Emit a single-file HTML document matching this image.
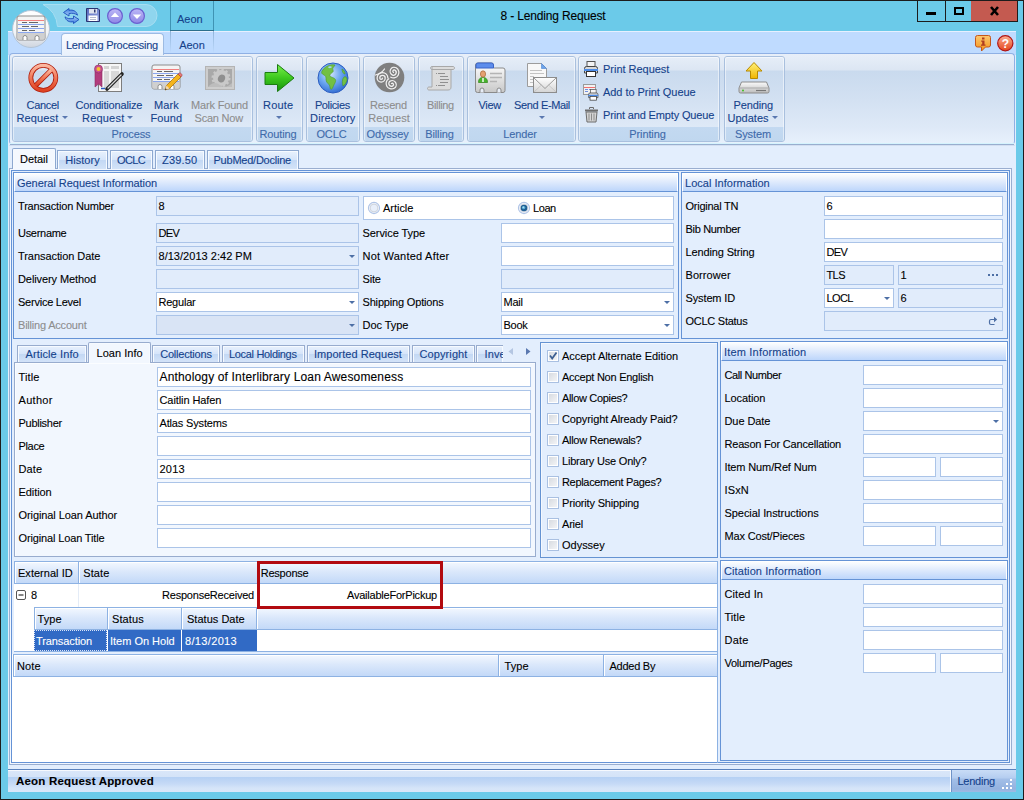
<!DOCTYPE html>
<html><head><meta charset="utf-8"><title>8 - Lending Request</title>
<style>
*{box-sizing:border-box;margin:0;padding:0}
html,body{width:1024px;height:800px;overflow:hidden;background:#6bcae9}
body{font-family:"Liberation Sans",sans-serif;font-size:11px;letter-spacing:-0.24px;color:#000;position:relative;-webkit-text-stroke:0.1px}
.a{position:absolute}
svg{position:absolute;overflow:visible}
#win{position:absolute;left:0;top:0;width:1024px;height:800px;background:#6bcae9;overflow:hidden}
.t{position:absolute;white-space:nowrap;line-height:13px;height:13px}
.bl{color:#15428b}
.gy{color:#8d8d8d}
.cap{color:#3e6aaa}
.c{text-align:center}
/* inputs */
.i{position:absolute;height:20px;border:1px solid #abc4e8;background:#fff;padding:3px 0 0 1.500px;white-space:nowrap;line-height:13px;overflow:hidden}
.i.r{background:#e1ecfb}
.i.d{background:#d9e4f5}
.dd:after{content:"";position:absolute;right:3px;top:8px;border:3px solid transparent;border-top:3px solid #4d6fa5;border-bottom:0;width:0;height:0}
/* group boxes */
.g{position:absolute;border:1px solid #6593d6;background:#e3eefd}
.g>.h{position:absolute;left:0;top:0;right:0;height:19px;border:1px solid #fff;border-bottom:1px solid #6593d6;background:linear-gradient(#fbfdff,#dde9fc 50%,#bdd6fb);color:#15428b;padding:3px 0 0 2px;white-space:nowrap;line-height:13px}
/* ribbon */
.rg{position:absolute;top:56px;height:86px;border:1px solid #a9c0de;border-radius:3px;background:linear-gradient(rgba(255,255,255,0) 0,rgba(255,255,255,0) 70px,#c3d9f1 70px,#c0d7ef 84px)}
.rg:before{content:"";position:absolute;left:0;top:0;right:0;bottom:0;border:1px solid rgba(255,255,255,.5);border-radius:2px;border-bottom:0}
.rg>.cap{position:absolute;left:0;right:3px;top:71px;height:14px;text-align:center;line-height:13px;white-space:nowrap}
/* tabs */
.tab{position:absolute;top:150px;height:19px;border:1px solid #8da8d0;border-bottom:0;background:linear-gradient(#e8f1fd,#d6e5fa 48%,#c3d8f4 52%,#d3e3f8);color:#15428b;text-align:center;line-height:13px;padding-top:3px;white-space:nowrap;box-shadow:inset 1px 1px 0 #f6faff,inset -1px 0 0 #f6faff}
.tab.on{top:148px;height:21px;background:#f4f8fe;color:#000;border-color:#8da8d0;border-radius:2px 2px 0 0;padding-top:4px;z-index:3}
/* checkbox */
.cb{position:absolute;width:12px;height:12px;border:1px solid #a9c0e2;background:linear-gradient(135deg,#d4d8de,#f6f7f9);box-shadow:inset 0 0 0 1px #fff}
/* grid header */
.gh{position:absolute;height:23px;border:1px solid #8db2e3;border-left:0;background:linear-gradient(#f3f8ff,#dbe8fb 45%,#c3d9f8);padding:5px 0 0 3px;white-space:nowrap;line-height:13px;box-shadow:inset 1px 1px 0 #fff}

</style></head><body>
<div id="win">
<div class="a" style="left:0px;top:0px;width:1024px;height:800px;border:1px solid #1c1c1c;z-index:50;pointer-events:none"></div>
<svg style="left:0;top:0" width="200" height="32"><path d="M43 4.500H146a11 11 0 0 1 0 22H57.500A27 27 0 0 0 43 4.500z" fill="#8fd5ee" stroke="#a6def2"/></svg>
<div class="a" style="left:170px;top:1px;width:1px;height:30px;background:#3f93b3"></div>
<div class="a" style="left:213px;top:1px;width:1px;height:30px;background:#3f93b3"></div>
<div class="a" style="left:170px;top:30px;width:44px;height:1px;background:#2c6f8c"></div>
<div class="t bl" style="left:177px;top:13px;letter-spacing:0px">Aeon</div>
<div class="t " style="left:441px;top:9px;font-size:12px;letter-spacing:-0.16px;width:224px;text-align:center;height:15px;line-height:15px">8 - Lending Request</div>
<div class="a" style="left:917px;top:1px;width:101px;height:21px;background:#1c1c1c"></div>
<div class="a" style="left:918px;top:1px;width:27px;height:20px;background:#6bcae9"></div>
<div class="a" style="left:946px;top:1px;width:25px;height:20px;background:#6bcae9"></div>
<div class="a" style="left:971px;top:1px;width:46px;height:20px;background:#c45a50"></div>
<div class="a" style="left:926px;top:12px;width:10px;height:3px;background:#000"></div>
<div class="a" style="left:954px;top:7px;width:10px;height:8px;border:2px solid #000"></div>
<svg style="left:990px;top:7px" width="9" height="8" viewBox="0 0 9 8"><path d="M1 0L8 8M8 0L1 8" stroke="#000" stroke-width="2.600"/></svg>
<svg style="left:63px;top:8px" width="17" height="16" viewBox="0 0 17 16"><defs><linearGradient id="rf" x1="0" y1="0" x2="0" y2="1"><stop offset="0" stop-color="#3c7ce0"/><stop offset="1" stop-color="#a8ccf6"/></linearGradient></defs><path d="M.500 4.500L6 .500V2.300C10 1.500 13.500 3 14.500 7.200 12.500 5.300 9.500 5 6 5.500V8z" fill="url(#rf)" stroke="#1c50bc" stroke-width=".9" stroke-linejoin="round"/><path d="M.500 4.500L6 .500V2.300C10 1.500 13.500 3 14.500 7.200 12.500 5.300 9.500 5 6 5.500V8z" transform="rotate(180 8.250 8)" fill="url(#rf)" stroke="#1c50bc" stroke-width=".9" stroke-linejoin="round"/></svg>
<svg style="left:86px;top:8px" width="14" height="14" viewBox="0 0 14 14"><defs><linearGradient id="sv" x1="0" y1="0" x2="1" y2="1"><stop offset="0" stop-color="#5668bc"/><stop offset="1" stop-color="#98a8e4"/></linearGradient></defs><path d="M.5.500h11.500l1.500 1.500v11.500H.5z" fill="url(#sv)" stroke="#2a3470"/><rect x="3" y="1" width="8" height="4.500" fill="#dfe3ee"/><rect x="8" y="1.500" width="1.500" height="3" fill="#2a3470"/><rect x="2.500" y="7.500" width="9" height="5.500" fill="#fff"/><path d="M4 9.500h6M4 11.500h6" stroke="#b4bace"/></svg>
<svg style="left:107px;top:8px" width="16" height="16" viewBox="0 0 16 16"><defs><linearGradient id="pc" x1="0" y1="0" x2="0" y2="1"><stop offset="0" stop-color="#bcb8f6"/><stop offset="1" stop-color="#8e86e6"/></linearGradient></defs><circle cx="8" cy="8" r="7.400" fill="url(#pc)" stroke="#6a5fd0" stroke-width="1.200"/><path d="M3.800 9L8 4.600 12.200 9z" fill="#fff"/></svg>
<svg style="left:129px;top:8px" width="16" height="16" viewBox="0 0 16 16"><defs><linearGradient id="pd" x1="0" y1="0" x2="0" y2="1"><stop offset="0" stop-color="#bcb8f6"/><stop offset="1" stop-color="#8e86e6"/></linearGradient></defs><circle cx="8" cy="8" r="7.400" fill="url(#pd)" stroke="#6a5fd0" stroke-width="1.200"/><path d="M3.800 6.500L8 10.900 12.200 6.500z" fill="#fff"/></svg>
<div class="a" style="left:8px;top:31px;width:1008px;height:761px;background:#e3eefd"></div>
<div class="a" style="left:8px;top:31px;width:1008px;height:24px;background:#bfdbff;border-top:1px solid #e6f0ff"></div>
<div class="a" style="left:170px;top:31px;width:1px;height:22px;background:linear-gradient(#8fb3d8,#bfdbff)"></div>
<div class="a" style="left:213px;top:31px;width:1px;height:22px;background:linear-gradient(#8fb3d8,#bfdbff)"></div>
<div class="a" style="left:61px;top:33px;width:103px;height:22px;border:1px solid #9dbbe3;border-bottom:0;border-radius:4px 4px 0 0;background:linear-gradient(#f8fbff,#e9f1fc);z-index:4"></div>
<div class="t bl" style="left:66px;top:39px;letter-spacing:-0.26px;z-index:5">Lending Processing</div>
<div class="t bl c" style="left:170px;top:39px;width:44px;letter-spacing:0px">Aeon</div>
<svg style="left:11px;top:9px;z-index:6" width="40" height="40"><defs><linearGradient id="ab" x1="0" y1="0" x2="0" y2="1"><stop offset="0" stop-color="#ffffff"/><stop offset=".6" stop-color="#f2f4f7"/><stop offset="1" stop-color="#cfd5df"/></linearGradient></defs><circle cx="20" cy="20" r="18.500" fill="url(#ab)" stroke="#b4c4d6"/></svg>
<svg style="z-index:7;left:16px;top:13px" width="30.0" height="30.0" viewBox="0 0 30 30"><rect x="1" y="3" width="28" height="24" rx="2" fill="#f4f4f4" stroke="#8c8c8c"/>
<rect x="1.5" y="20" width="27" height="6.5" fill="#d0d0d0"/>
<path d="M7 27v-2.5a2 2 0 0 1 4 0V27M19 27v-2.5a2 2 0 0 1 4 0V27" fill="#fff" stroke="#8c8c8c"/>
<path d="M2 7.5h26" stroke="#f08080" stroke-width="1"/>
<path d="M2 11.5h26M2 15.5h26M2 19.5h26" stroke="#8aa6ee" stroke-width="1"/>
<path d="M6 9.500h5M13 9.500h9M6 13.500h7M15 13.500h7M6 17.500h5M13 17.500h6" stroke="#666" stroke-width="1"/></svg>
<svg style="left:975px;top:35px" width="16" height="17" viewBox="0 0 16 17"><defs><linearGradient id="ig" x1="0" y1="0" x2="0" y2="1"><stop offset="0" stop-color="#fcc870"/><stop offset="1" stop-color="#f59418"/></linearGradient></defs><path d="M2.500.5h11a2 2 0 0 1 2 2v7.500a2 2 0 0 1-2 2H10.500L6.500 16v-4H2.500a2 2 0 0 1-2-2V2.500a2 2 0 0 1 2-2z" fill="url(#ig)" stroke="#c4561c"/><rect x="7" y="2.500" width="2.500" height="2" fill="#b03c20"/><path d="M6.200 5.500h3.300v4h1v1.200H6v-1.200h1.200v-2.800h-1z" fill="#b03c20"/></svg>
<svg style="left:997px;top:35px" width="17" height="17" viewBox="0 0 17 17"><defs><linearGradient id="hg" x1="0" y1="0" x2="0" y2="1"><stop offset="0" stop-color="#fbb094"/><stop offset="1" stop-color="#e4441c"/></linearGradient></defs><circle cx="8.300" cy="8.200" r="7.600" fill="url(#hg)" stroke="#b01414" stroke-width="1.200"/><text x="8.300" y="12.500" font-size="12" font-weight="bold" fill="#fff" text-anchor="middle" font-family="Liberation Sans, sans-serif">?</text></svg>
<div class="a" style="left:9px;top:53px;width:1006px;height:91px;border:1px solid #8fb0e4;border-bottom:0;border-radius:4px 4px 3px 3px;background:linear-gradient(#e8eff9 0,#dce6f3 16px,#c9daee 17px,#d3e1f2 46px,#dee9f7 73px,#e7f1fc 89px)"></div>
<div class="a" style="left:10px;top:143px;width:1004px;height:1px;background:#d4f3fd"></div>
<div class="a" style="left:10px;top:144px;width:1004px;height:1px;background:#98aecf"></div>
<div class="a" style="left:9px;top:145px;width:1006px;height:1px;background:#d3dff1"></div>
<div class="rg" style="left:12px;width:241px"><div class="cap" style="letter-spacing:-0.1px">Process</div></div>
<div class="rg" style="left:256px;width:47px"><div class="cap" style="letter-spacing:-0.1px">Routing</div></div>
<div class="rg" style="left:306px;width:54px"><div class="cap" style="letter-spacing:-0.1px">OCLC</div></div>
<div class="rg" style="left:363px;width:52px"><div class="cap" style="letter-spacing:-0.1px">Odyssey</div></div>
<div class="rg" style="left:418px;width:46px"><div class="cap" style="letter-spacing:-0.1px">Billing</div></div>
<div class="rg" style="left:467px;width:109px"><div class="cap" style="letter-spacing:-0.1px">Lender</div></div>
<div class="rg" style="left:578px;width:142px"><div class="cap" style="letter-spacing:-0.1px">Printing</div></div>
<div class="rg" style="left:724px;width:61px"><div class="cap" style="letter-spacing:-0.1px">System</div></div>
<div class="t bl" style="left:26.5px;top:99px;letter-spacing:-0.31px;">Cancel</div>
<div class="t bl" style="left:16.5px;top:112px;letter-spacing:0.119px;">Request</div>
<div class="a" style="left:61.5px;top:116px;border:3px solid transparent;border-top:3px solid #5a78b0;border-bottom:0;width:0;height:0"></div>
<div class="t bl" style="left:75.5px;top:99px;letter-spacing:-0.17px;">Conditionalize</div>
<div class="t bl" style="left:82.0px;top:112px;letter-spacing:0.203px;">Request</div>
<div class="a" style="left:126.5px;top:116px;border:3px solid transparent;border-top:3px solid #5a78b0;border-bottom:0;width:0;height:0"></div>
<div class="t bl" style="left:153.9px;top:99px;letter-spacing:0.116px;">Mark</div>
<div class="t bl" style="left:150.5px;top:112px;letter-spacing:0.124px;">Found</div>
<div class="t gy" style="left:191.1px;top:99px;letter-spacing:-0.178px;">Mark Found</div>
<div class="t gy" style="left:194.5px;top:112px;letter-spacing:-0.206px;">Scan Now</div>
<div class="t bl" style="left:263.0px;top:99px;letter-spacing:0.21px;">Route</div>
<div class="a" style="left:275.5px;top:116px;border:3px solid transparent;border-top:3px solid #5a78b0;border-bottom:0;width:0;height:0"></div>
<div class="t bl" style="left:314.9px;top:99px;letter-spacing:-0.372px;">Policies</div>
<div class="t bl" style="left:310.1px;top:112px;letter-spacing:0.136px;">Directory</div>
<div class="t gy" style="left:370.1px;top:99px;letter-spacing:-0.164px;">Resend</div>
<div class="t gy" style="left:368.2px;top:112px;letter-spacing:0.119px;">Request</div>
<div class="t gy" style="left:427.0px;top:99px;letter-spacing:-0.36px;">Billing</div>
<div class="t bl" style="left:478.5px;top:99px;letter-spacing:-0.319px;">View</div>
<div class="t bl" style="left:514.1px;top:99px;letter-spacing:-0.382px;">Send E-Mail</div>
<div class="a" style="left:538.5px;top:116px;border:3px solid transparent;border-top:3px solid #5a78b0;border-bottom:0;width:0;height:0"></div>
<div class="t bl" style="left:733.5px;top:99px;letter-spacing:-0.112px;">Pending</div>
<div class="t bl" style="left:727.5px;top:112px;letter-spacing:0.019px;">Updates</div>
<div class="a" style="left:772px;top:116px;border:3px solid transparent;border-top:3px solid #5a78b0;border-bottom:0;width:0;height:0"></div>
<div class="t bl" style="left:603px;top:63px;letter-spacing:-0.021px;">Print Request</div>
<div class="t bl" style="left:603px;top:86px;letter-spacing:-0.051px;">Add to Print Queue</div>
<div class="t bl" style="left:603px;top:109px;letter-spacing:-0.147px;">Print and Empty Queue</div>
<svg style="left:28px;top:62px" width="31" height="31" viewBox="0 0 31 31"><defs><linearGradient id="cg" x1="0" y1="0" x2="0" y2="1"><stop offset="0" stop-color="#fcb8a0"/><stop offset=".5" stop-color="#f07858"/><stop offset="1" stop-color="#de4222"/></linearGradient></defs><circle cx="15.300" cy="15.800" r="12.500" fill="none" stroke="#b01c0a" stroke-width="4.800"/><path d="M7.200 24L23.500 7.700" stroke="#b01c0a" stroke-width="4.800"/><circle cx="15.300" cy="15.800" r="12.500" fill="none" stroke="url(#cg)" stroke-width="3.200"/><path d="M7.500 23.700L23.200 8" stroke="url(#cg)" stroke-width="3.200"/></svg>
<svg style="left:93px;top:62px" width="32" height="32" viewBox="0 0 32 32"><rect x="5.500" y="1.500" width="23" height="28" fill="#f6f6f6" stroke="#7d7d7d"/><rect x="11" y="4" width="5" height="3" fill="#d4d4d4"/><rect x="18" y="4" width="8" height="3" fill="#d4d4d4"/><rect x="11" y="9" width="5" height="17" fill="#d9d9d9"/><rect x="18" y="9" width="8" height="17" fill="#d9d9d9"/><path d="M8 26.500h4" stroke="#2c5cc0" stroke-width="1.500"/><path d="M2 8v17l3.500-3 3.500 3V8z" fill="#b23c7c" stroke="#8a2860" stroke-width=".6"/><circle cx="5.500" cy="7" r="4" fill="#c85090" stroke="#8a2860" stroke-width=".6"/><circle cx="5.500" cy="7" r="2" fill="#f8c030"/><path d="M14 27L29 12" stroke="#222" stroke-width="3.600" stroke-linecap="round"/><path d="M15 26L28 13" stroke="#d8d8d8" stroke-width="1.200" stroke-linecap="round"/></svg>
<svg style="left:151px;top:62px" width="30.0" height="30.0" viewBox="0 0 30 30"><rect x="1" y="3" width="28" height="24" rx="2" fill="#f4f4f4" stroke="#8c8c8c"/>
<rect x="1.5" y="20" width="27" height="6.5" fill="#d0d0d0"/>
<path d="M7 27v-2.5a2 2 0 0 1 4 0V27M19 27v-2.5a2 2 0 0 1 4 0V27" fill="#fff" stroke="#8c8c8c"/>
<path d="M2 7.5h26" stroke="#f08080" stroke-width="1"/>
<path d="M2 11.5h26M2 15.5h26M2 19.5h26" stroke="#8aa6ee" stroke-width="1"/>
<path d="M6 9.500h5M13 9.500h9M6 13.500h7M15 13.500h7M6 17.500h5M13 17.500h6" stroke="#666" stroke-width="1"/></svg>
<svg style="left:163px;top:72px" width="20" height="20" viewBox="0 0 20 20"><path d="M2 18l1.500-4.500L15 2l3 3L6.500 16.500z" fill="#f4b41c" stroke="#a86c00" stroke-width=".7"/><path d="M15 2l3 3 1-1.500c.5-1-1.500-3-2.500-2.500z" fill="#e87878" stroke="#a04040" stroke-width=".6"/><path d="M2 18l1.500-4.500 3 3z" fill="#f0d8b0"/><path d="M2 18l.6-1.800 1.200 1.200z" fill="#222"/></svg>
<svg style="left:205px;top:66px" width="30" height="24" viewBox="0 0 30 24"><rect x=".5" y=".5" width="29" height="23" fill="#cdcdcd" stroke="#b4b4b4"/><rect x="3" y="3" width="24" height="18" fill="#a9a9a9"/><circle cx="16" cy="12" r="8" fill="#c9c9c9"/><circle cx="16" cy="12" r="8" fill="none" stroke="#c9c9c9" stroke-width="3" stroke-dasharray="2.200 2"/><ellipse cx="16.500" cy="12.500" rx="3.500" ry="4" fill="#8f8f8f" transform="rotate(25 16.500 12.500)"/><path d="M3 21c4-5 8-5 12-2s8 2 12-2v4z" fill="#bdbdbd"/></svg>
<svg style="left:264px;top:63px" width="31" height="30" viewBox="0 0 31 30"><defs><linearGradient id="rg1" x1="0" y1="0" x2="0" y2="1"><stop offset="0" stop-color="#7af04c"/><stop offset=".5" stop-color="#3cc81e"/><stop offset="1" stop-color="#16920c"/></linearGradient></defs><path d="M1 9.500h12.500V1.500L30 15 13.500 28.500V21.500H1z" fill="url(#rg1)" stroke="#1a7c10" stroke-linejoin="round"/></svg>
<svg style="left:317px;top:62px" width="32" height="32" viewBox="0 0 32 32"><defs><radialGradient id="gl" cx=".4" cy=".35" r=".7"><stop offset="0" stop-color="#d4e6fc"/><stop offset=".5" stop-color="#6ea8f0"/><stop offset="1" stop-color="#2c68d0"/></radialGradient></defs><circle cx="16" cy="16" r="15" fill="url(#gl)" stroke="#2a5cc0"/><path d="M5 9c3-5 9-7 13-6-1 2-3 3-2 5 1 3-2 2-3 5-1 2 3 2 5 4s-1 5-2 8c-1 3-3 3-3 0s-4-4-4-7 0-4-2-5-3-2-2-4z" fill="#72c044" stroke="#4c9a28" stroke-width=".6"/><path d="M25 7c2 1 3 3 3 5-2 0-3-3-3-5zM27 15c2-1 3 1 3 3-1 3-2 5-4 6-1-3-1-7 1-9z" fill="#72c044" stroke="#4c9a28" stroke-width=".6"/><path d="M11 5c1-1 3-1 4 0-1 1-3 2-4 0z" fill="#a8d4f4"/></svg>
<svg style="left:374px;top:62px" width="31" height="31" viewBox="0 0 31 31"><circle cx="15.500" cy="15.500" r="14.800" fill="#7f7f7f"/><g fill="none" stroke="#f2f2f2" stroke-width="1.250" stroke-linecap="round"><path d="M8.5 16a1.35 1.35 0 0 1 2.70 0a2.70 2.70 0 0 1 -5.40 0a4.05 4.05 0 0 1 8.10 0a5.40 5.40 0 0 1 -10.80 0" transform="rotate(180 8.5 16)"/><path d="M19.5 10.5a1.35 1.35 0 0 1 2.70 0a2.70 2.70 0 0 1 -5.40 0a4.05 4.05 0 0 1 8.10 0a5.40 5.40 0 0 1 -10.80 0" transform="rotate(300 19.5 10.5)"/><path d="M17.5 21.5a1.35 1.35 0 0 1 2.70 0a2.70 2.70 0 0 1 -5.40 0a4.05 4.05 0 0 1 8.10 0a5.40 5.40 0 0 1 -10.80 0" transform="rotate(60 17.5 21.5)"/><path d="M1.500 13c4-1 7-3 9-6"/></g></svg>
<svg style="left:427px;top:64px" width="29" height="28" viewBox="0 0 29 28"><path d="M5 2.500h21c2 0 2 3 0 3H24V23c0 2-1 3-3 3H2c-2 0-2-3 0-3h3z" fill="#dcdcdc" stroke="#a8a8a8"/><path d="M5 2.500c-2 0-2 3 0 3h21" fill="none" stroke="#a8a8a8"/><path d="M11 9.500h7M13 12.500h8M13 15.500h9M13 18.500h8M11 21.500h7" stroke="#909090" stroke-width="1.200"/><path d="M9 9.500h1M9 21.500h1" stroke="#909090" stroke-width="1.200"/></svg>
<svg style="left:475px;top:62px" width="31" height="31" viewBox="0 0 31 31"><defs><linearGradient id="vg" x1="0" y1="0" x2="0" y2="1"><stop offset="0" stop-color="#ffffff"/><stop offset="1" stop-color="#c8c8c8"/></linearGradient></defs><path d="M.5 3a2 2 0 0 1 2-2h14a2 2 0 0 1 2 2v3h9.500a2 2 0 0 1 2 2v20.500a2 2 0 0 1-2 2H2.500a2 2 0 0 1-2-2z" fill="url(#vg)" stroke="#8a8a8a"/><path d="M1 3a2 2 0 0 1 2-2h13.500a2 2 0 0 1 2 2v3H1z" fill="#5c8cec" stroke="#3a64c8"/><path d="M5 30.500v-2.500a2 2 0 0 1 4 0v2.500M22 30.500v-2.500a2 2 0 0 1 4 0v2.500" fill="#e8eef8" stroke="#8a8a8a"/><path d="M15 11.500h12M15 15.500h12M15 19.500h7" stroke="#b4b4b4" stroke-width="1.500"/><path d="M3.500 20.500c0-4 2-5 4.500-5s4.500 1 4.500 5z" fill="#48b42c" stroke="#2c8418" stroke-width=".7"/><path d="M7.300 16h1.400v4H7.300z" fill="#fff"/><ellipse cx="8" cy="12" rx="2.600" ry="3.200" fill="#e4a070" stroke="#a86838" stroke-width=".7"/></svg>
<svg style="left:527px;top:62px" width="31" height="31" viewBox="0 0 31 31"><defs><linearGradient id="eg" x1="0" y1="0" x2="0" y2="1"><stop offset="0" stop-color="#ffffff"/><stop offset="1" stop-color="#d4d4d4"/></linearGradient></defs><path d="M.5 1.500h14l5 5v18H.5z" fill="#f8f8f8" stroke="#9c9c9c"/><path d="M14.500 1.500l5 5h-5z" fill="#6ca4ec" stroke="#4c84d0" stroke-width=".6"/><path d="M3 8.500h12M3 11.500h14M3 14.500h4M3 17.500h3M3 20.500h3" stroke="#c4c4c4" stroke-width="1.200"/><rect x="6.500" y="15.500" width="23" height="15" fill="url(#eg)" stroke="#8c8c8c"/><path d="M7 16l11 10.500L29 16" fill="none" stroke="#9c9c9c"/><path d="M7 30l8-7.500M29 30l-8-7.500" stroke="#c0c0c0" stroke-width=".8"/></svg>
<svg style="left:738px;top:61px" width="32" height="32" viewBox="0 0 32 32"><defs><linearGradient id="pg" x1="0" y1="0" x2="0" y2="1"><stop offset="0" stop-color="#fff27a"/><stop offset="1" stop-color="#f0b400"/></linearGradient><linearGradient id="dg" x1="0" y1="0" x2="0" y2="1"><stop offset="0" stop-color="#fafafa"/><stop offset="1" stop-color="#bdbdbd"/></linearGradient></defs><path d="M16 1.500l8 8.500h-4.500v7.500h-7V10H8z" fill="url(#pg)" stroke="#b88a00" stroke-linejoin="round"/><path d="M3.500 21h25l2.500 6v3.500a1.500 1.500 0 0 1-1.500 1.500h-27A1.500 1.500 0 0 1 1 30.500V27z" fill="url(#dg)" stroke="#8c8c8c"/><path d="M1.500 27h29" stroke="#a8a8a8"/><circle cx="5" cy="29.500" r="1" fill="#3cc020"/><path d="M18 29.500h10" stroke="#777" stroke-width="1.200"/></svg>
<svg style="left:583px;top:61px" width="16" height="16" viewBox="0 0 16 16"><rect x="4" y=".5" width="8" height="6" fill="#f4f4f4" stroke="#555"/><path d="M1.500 7.500a2 2 0 0 1 2-2h9a2 2 0 0 1 2 2v4.500h-13z" fill="#d8d8d8" stroke="#444"/><path d="M1 9h14" stroke="#4c8ce8" stroke-width="2"/><rect x="3.500" y="10.500" width="9" height="5" fill="#fff" stroke="#333"/></svg>
<svg style="left:583px;top:84px" width="16" height="16" viewBox="0 0 16 16"><rect x=".5" y=".5" width="12" height="10" fill="#f2f2f2" stroke="#9a9a9a"/><path d="M1 3.500h11" stroke="#f07070"/><path d="M2 5.500h3M6 5.500h5M2 7.500h3" stroke="#7090e0"/><g transform="translate(4.500 5) scale(.72)"><rect x="4" y=".5" width="8" height="6" fill="#f4f4f4" stroke="#555"/><path d="M1.500 7.500a2 2 0 0 1 2-2h9a2 2 0 0 1 2 2v4.500h-13z" fill="#d8d8d8" stroke="#444"/><path d="M1 9h14" stroke="#4c8ce8" stroke-width="2"/><rect x="3.500" y="10.500" width="9" height="5" fill="#fff" stroke="#333"/></g></svg>
<svg style="left:584px;top:106px" width="15" height="17" viewBox="0 0 15 17"><path d="M1 4.500h13" stroke="#6c6c6c" stroke-width="2"/><path d="M5.500 3V1.500h4V3" fill="none" stroke="#6c6c6c"/><path d="M2 6h11l-1 10H3z" fill="#d4d4d4" stroke="#6c6c6c"/><path d="M5 7.500v7M7.500 7.500v7M10 7.500v7" stroke="#8c8c8c"/></svg>
<div class="a" style="left:9px;top:168px;width:1003px;height:597px;border:1px solid #9aaed0;background:#f2f7ff"></div>
<div class="a" style="left:11px;top:170px;width:999px;height:593px;border:1px solid #6593d6;background:#e3eefd"></div>
<div class="tab on" style="left:12px;width:44px;text-align:left;padding-left:7.100000000000001px;letter-spacing:-0.065px;">Detail</div>
<div class="tab" style="left:57px;width:51px;text-align:left;padding-left:7.299999999999997px;letter-spacing:0.028px;">History</div>
<div class="tab" style="left:110px;width:43px;text-align:left;padding-left:6.0px;letter-spacing:-0.6px;">OCLC</div>
<div class="tab" style="left:155px;width:50px;text-align:left;padding-left:6.0px;letter-spacing:0.19px;">Z39.50</div>
<div class="tab" style="left:207px;width:92px;text-align:left;padding-left:5.5px;letter-spacing:-0.232px;">PubMed/Docline</div>
<div class="g" style="left:13px;top:172px;width:666px;height:167px"><div class="h" style="letter-spacing:-0.04px">General Request Information</div></div>
<div class="t " style="left:18px;top:200px;letter-spacing:-0.179px;">Transaction Number</div>
<div class="i r" style="left:156px;top:196px;width:203px;">8</div>
<div class="t " style="left:18px;top:227px;letter-spacing:-0.293px;">Username</div>
<div class="i r" style="left:156px;top:223px;width:203px;letter-spacing:-0.6px;">DEV</div>
<div class="t " style="left:18px;top:250px;letter-spacing:-0.064px;">Transaction Date</div>
<div class="i r dd" style="left:156px;top:246px;width:203px;letter-spacing:0.027px;">8/13/2013 2:42 PM</div>
<div class="t " style="left:18px;top:273px;letter-spacing:-0.092px;">Delivery Method</div>
<div class="i r" style="left:156px;top:269px;width:203px;"></div>
<div class="t " style="left:18px;top:296px;letter-spacing:-0.237px;">Service Level</div>
<div class="i dd" style="left:156px;top:292px;width:203px;letter-spacing:-0.222px;">Regular</div>
<div class="t gy" style="left:18px;top:319px;letter-spacing:-0.203px;">Billing Account</div>
<div class="i d dd" style="left:156px;top:315px;width:203px;"></div>
<div class="a" style="left:363px;top:196px;width:311px;height:24px;border:1px solid #abc4e8;background:#fff"></div>
<svg style="left:368px;top:202px" width="12" height="12" viewBox="0 0 12 12"><circle cx="6" cy="6" r="5.600" fill="#f2f6fc" stroke="#b0c4e6" stroke-width="1.100"/><circle cx="6" cy="6" r="3.900" fill="#e8effa" stroke="#cfd4dc"/></svg>
<div class="t " style="left:383px;top:202px;letter-spacing:-0.027px;">Article</div>
<svg style="left:518px;top:202px" width="12" height="12" viewBox="0 0 12 12"><circle cx="6" cy="6" r="5.600" fill="#f2f6fc" stroke="#b0c4e6" stroke-width="1.100"/><circle cx="6" cy="6" r="3.900" fill="#e8effa" stroke="#cfd4dc"/><circle cx="6" cy="6" r="3.300" fill="#1e5e92"/><circle cx="5.600" cy="5.600" r="1.700" fill="#5fb0d8"/><circle cx="5.300" cy="5.200" r=".8" fill="#b4e4f4"/></svg>
<div class="t " style="left:533px;top:202px;letter-spacing:-0.428px;">Loan</div>
<div class="t " style="left:362.5px;top:227px;letter-spacing:-0.063px;">Service Type</div>
<div class="i " style="left:501px;top:223px;width:173px;"></div>
<div class="t " style="left:362.5px;top:250px;letter-spacing:0.223px;">Not Wanted After</div>
<div class="i " style="left:501px;top:246px;width:173px;"></div>
<div class="t " style="left:362.5px;top:273px;letter-spacing:-0.19px;">Site</div>
<div class="i r" style="left:501px;top:269px;width:173px;"></div>
<div class="t " style="left:362.5px;top:296px;letter-spacing:-0.172px;">Shipping Options</div>
<div class="i dd" style="left:501px;top:292px;width:173px;">Mail</div>
<div class="t " style="left:362.5px;top:319px;letter-spacing:-0.054px;">Doc Type</div>
<div class="i dd" style="left:501px;top:315px;width:173px;">Book</div>
<div class="g" style="left:681px;top:172px;width:327px;height:167px"><div class="h" style="letter-spacing:0.019px">Local Information</div></div>
<div class="t " style="left:685.5px;top:200px;letter-spacing:-0.254px;">Original TN</div>
<div class="i " style="left:824px;top:196px;width:179px;">6</div>
<div class="t " style="left:685.5px;top:223px;letter-spacing:-0.32px;">Bib Number</div>
<div class="i " style="left:824px;top:219px;width:179px;"></div>
<div class="t " style="left:685.5px;top:246px;letter-spacing:-0.135px;">Lending String</div>
<div class="i " style="left:824px;top:242px;width:179px;letter-spacing:-0.6px;">DEV</div>
<div class="t " style="left:685.5px;top:269px;letter-spacing:0.082px;">Borrower</div>
<div class="i r" style="left:824px;top:265px;width:70px;letter-spacing:-0.6px;">TLS</div>
<div class="i r" style="left:898px;top:265px;width:105px;">1</div>
<div class="a" style="left:988px;top:274px;width:2px;height:2px;background:#4d6fa5"></div>
<div class="a" style="left:992px;top:274px;width:2px;height:2px;background:#4d6fa5"></div>
<div class="a" style="left:996px;top:274px;width:2px;height:2px;background:#4d6fa5"></div>
<div class="t " style="left:685.5px;top:292px;letter-spacing:-0.129px;">System ID</div>
<div class="i dd" style="left:824px;top:288px;width:70px;letter-spacing:-0.6px;">LOCL</div>
<div class="i r" style="left:898px;top:288px;width:105px;">6</div>
<div class="t " style="left:685.5px;top:315px;letter-spacing:-0.261px;">OCLC Status</div>
<div class="i r" style="left:824px;top:311px;width:179px;"></div>
<svg style="left:988px;top:316px" width="10" height="10" viewBox="0 0 10 10"><path d="M6.500 3.500H3a1.500 1.500 0 0 0-1.500 1.500v2A1.500 1.500 0 0 0 3 8.500h3.500" fill="none" stroke="#4d6fa5" stroke-width="1.200"/><path d="M6 .8L9.200 3.500 6 6.200z" fill="#4d6fa5"/></svg>
<div class="a" style="left:14px;top:362px;width:522px;height:195px;border:1px solid #98acce;background:#f2f7fe;box-shadow:inset 1px 1px 0 #fbfdff"></div>
<div class="tab" style="left:17px;width:70px;top:345px;height:17px;padding-top:2px;border-color:#98acce;text-align:left;padding-left:7.5px;letter-spacing:0.112px;">Article Info</div>
<div class="tab on" style="left:88px;width:63px;top:342px;height:21px;padding-top:4px;border-color:#98acce;background:#f2f7fe;text-align:left;padding-left:7.5px;letter-spacing:0.041px;">Loan Info</div>
<div class="tab" style="left:152px;width:68px;top:345px;height:17px;padding-top:2px;border-color:#98acce;text-align:left;padding-left:7.199999999999989px;letter-spacing:-0.211px;">Collections</div>
<div class="tab" style="left:222px;width:83px;top:345px;height:17px;padding-top:2px;border-color:#98acce;text-align:left;padding-left:6.0px;letter-spacing:-0.327px;">Local Holdings</div>
<div class="tab" style="left:307px;width:103px;top:345px;height:17px;padding-top:2px;border-color:#98acce;text-align:left;padding-left:6.0px;letter-spacing:0.031px;">Imported Request</div>
<div class="tab" style="left:412px;width:63px;top:345px;height:17px;padding-top:2px;border-color:#98acce;text-align:left;padding-left:6.5px;letter-spacing:0.103px;">Copyright</div>
<div class="tab" style="left:476px;width:27px;top:345px;height:17px;padding-top:2px;border-color:#98acce;overflow:hidden;border-right:0;text-align:left;padding-left:7.5px;letter-spacing:0.119px;">Inventory</div>
<svg style="left:507px;top:347px" width="8" height="10" viewBox="0 0 8 10"><path d="M6 1v7L1.500 4.500z" fill="#b4c6e2"/></svg>
<svg style="left:524px;top:347px" width="8" height="10" viewBox="0 0 8 10"><path d="M2 1v7l4.500-3.500z" fill="#5a78b0"/></svg>
<div class="t " style="left:18.5px;top:371px;letter-spacing:0.131px;">Title</div>
<div class="i " style="left:157px;top:367px;width:374px;letter-spacing:0.157px;font-size:12px;padding-top:2.500px">Anthology of Interlibrary Loan Awesomeness</div>
<div class="t " style="left:18.5px;top:394px;letter-spacing:0.296px;">Author</div>
<div class="i " style="left:157px;top:390px;width:374px;letter-spacing:-0.082px;">Caitlin Hafen</div>
<div class="t " style="left:18.5px;top:417px;letter-spacing:-0.27px;">Publisher</div>
<div class="i " style="left:157px;top:413px;width:374px;letter-spacing:-0.157px;">Atlas Systems</div>
<div class="t " style="left:18.5px;top:440px;letter-spacing:-0.333px;">Place</div>
<div class="i " style="left:157px;top:436px;width:374px;"></div>
<div class="t " style="left:18.5px;top:463px;letter-spacing:0.15px;">Date</div>
<div class="i " style="left:157px;top:459px;width:374px;letter-spacing:0.239px;">2013</div>
<div class="t " style="left:18.5px;top:486px;letter-spacing:-0.073px;">Edition</div>
<div class="i " style="left:157px;top:482px;width:374px;"></div>
<div class="t " style="left:18.5px;top:509px;letter-spacing:-0.084px;">Original Loan Author</div>
<div class="i " style="left:157px;top:505px;width:374px;"></div>
<div class="t " style="left:18.5px;top:532px;letter-spacing:-0.137px;">Original Loan Title</div>
<div class="i " style="left:157px;top:528px;width:374px;"></div>
<div class="a" style="left:540px;top:342px;width:178px;height:216px;border:1px solid #6593d2;background:#e3eefd;box-shadow:inset 1px 1px 0 #f4f8fe"></div>
<div class="cb" style="left:547px;top:350px"><svg style="left:1px;top:1px" width="8" height="8"><path d="M1 3.500l2.200 3L7.500 .5" fill="none" stroke="#3c5f92" stroke-width="1.800"/></svg></div>
<div class="t " style="left:562px;top:350px;letter-spacing:-0.026px;">Accept Alternate Edition</div>
<div class="cb" style="left:547px;top:371px"></div>
<div class="t " style="left:562px;top:371px;letter-spacing:-0.253px;">Accept Non English</div>
<div class="cb" style="left:547px;top:392px"></div>
<div class="t " style="left:562px;top:392px;letter-spacing:-0.334px;">Allow Copies?</div>
<div class="cb" style="left:547px;top:413px"></div>
<div class="t " style="left:562px;top:413px;letter-spacing:-0.105px;">Copyright Already Paid?</div>
<div class="cb" style="left:547px;top:434px"></div>
<div class="t " style="left:562px;top:434px;letter-spacing:-0.29px;">Allow Renewals?</div>
<div class="cb" style="left:547px;top:455px"></div>
<div class="t " style="left:562px;top:455px;letter-spacing:-0.209px;">Library Use Only?</div>
<div class="cb" style="left:547px;top:476px"></div>
<div class="t " style="left:562px;top:476px;letter-spacing:-0.323px;">Replacement Pages?</div>
<div class="cb" style="left:547px;top:497px"></div>
<div class="t " style="left:562px;top:497px;letter-spacing:-0.181px;">Priority Shipping</div>
<div class="cb" style="left:547px;top:518px"></div>
<div class="t " style="left:562px;top:518px;letter-spacing:-0.204px;">Ariel</div>
<div class="cb" style="left:547px;top:539px"></div>
<div class="t " style="left:562px;top:539px;letter-spacing:-0.016px;">Odyssey</div>
<div class="g" style="left:720px;top:341px;width:288px;height:217px"><div class="h" style="letter-spacing:0.181px">Item Information</div></div>
<div class="t " style="left:724.5px;top:369px;letter-spacing:-0.394px;">Call Number</div>
<div class="i " style="left:863px;top:365px;width:140px;"></div>
<div class="t " style="left:724.5px;top:392px;letter-spacing:-0.099px;">Location</div>
<div class="i " style="left:863px;top:388px;width:140px;"></div>
<div class="t " style="left:724.5px;top:415px;letter-spacing:-0.083px;">Due Date</div>
<div class="i dd" style="left:863px;top:411px;width:140px;"></div>
<div class="t " style="left:724.5px;top:438px;letter-spacing:-0.199px;">Reason For Cancellation</div>
<div class="i " style="left:863px;top:434px;width:140px;"></div>
<div class="t " style="left:724.5px;top:461px;letter-spacing:-0.129px;">Item Num/Ref Num</div>
<div class="i " style="left:863px;top:457px;width:73px;"></div>
<div class="i " style="left:940px;top:457px;width:63px;"></div>
<div class="t " style="left:724.5px;top:484px;letter-spacing:0.119px;">ISxN</div>
<div class="i " style="left:863px;top:480px;width:140px;"></div>
<div class="t " style="left:724.5px;top:507px;letter-spacing:-0.063px;">Special Instructions</div>
<div class="i " style="left:863px;top:503px;width:140px;"></div>
<div class="t " style="left:724.5px;top:530px;letter-spacing:-0.167px;">Max Cost/Pieces</div>
<div class="i " style="left:863px;top:526px;width:73px;"></div>
<div class="i " style="left:940px;top:526px;width:63px;"></div>
<div class="g" style="left:720px;top:560px;width:288px;height:201px"><div class="h" style="letter-spacing:0.095px">Citation Information</div></div>
<div class="t " style="left:724.5px;top:588px;letter-spacing:0.068px;">Cited In</div>
<div class="i " style="left:863px;top:584px;width:140px;"></div>
<div class="t " style="left:724.5px;top:611px;letter-spacing:0.056px;">Title</div>
<div class="i " style="left:863px;top:607px;width:140px;"></div>
<div class="t " style="left:724.5px;top:634px;letter-spacing:0.183px;">Date</div>
<div class="i " style="left:863px;top:630px;width:140px;"></div>
<div class="t " style="left:724.5px;top:657px;letter-spacing:-0.267px;">Volume/Pages</div>
<div class="i " style="left:863px;top:653px;width:73px;"></div>
<div class="i " style="left:940px;top:653px;width:63px;"></div>
<div class="a" style="left:14px;top:561px;width:704px;height:90px;background:#fff"></div>
<div class="a" style="left:12px;top:654px;width:706px;height:108px;background:#fff"></div>
<div class="gh" style="left:14px;top:561px;width:65px;padding-left:3.0px;letter-spacing:0.028px;border-left:1px solid #8db2e3;">External ID</div>
<div class="gh" style="left:79px;top:561px;width:179px;padding-left:4.200000000000003px;letter-spacing:0.128px;">State</div>
<div class="gh" style="left:258px;top:561px;width:184px;padding-left:2.6999999999999886px;letter-spacing:-0.221px;">Response</div>
<div class="gh" style="left:442px;top:561px;width:276px;"></div>
<svg style="left:16px;top:590px" width="10" height="10" viewBox="0 0 10 10"><rect x=".5" y=".5" width="9" height="9" rx="1.500" fill="#fff" stroke="#555"/><path d="M2.500 5h5" stroke="#333" stroke-width="1.200"/></svg>
<div class="t " style="left:31px;top:589px;">8</div>
<div class="t " style="left:162px;top:589px;letter-spacing:-0.213px;">ResponseReceived</div>
<div class="t " style="left:347px;top:589px;letter-spacing:-0.222px;">AvailableForPickup</div>
<div class="a" style="left:78px;top:584px;width:1px;height:23px;background:#e4ecf7"></div>
<div class="gh" style="left:34px;top:607px;width:74px;padding-left:2.5px;letter-spacing:0.114px;border-left:1px solid #8db2e3;">Type</div>
<div class="gh" style="left:108px;top:607px;width:74px;padding-left:4.0px;letter-spacing:0.102px;">Status</div>
<div class="gh" style="left:182px;top:607px;width:75px;padding-left:5.0px;letter-spacing:0.022px;">Status Date</div>
<div class="gh" style="left:257px;top:607px;width:461px;"></div>
<div class="a" style="left:34px;top:630px;width:223px;height:21px;background:#316ac5"></div>
<div class="a" style="left:107px;top:630px;width:1px;height:21px;background:#fff"></div>
<div class="a" style="left:181px;top:630px;width:1px;height:21px;background:#fff"></div>
<div class="a" style="left:34px;top:630px;width:73px;height:21px;border:1px dotted #d8e4f8"></div>
<div class="t " style="left:36px;top:635px;letter-spacing:-0.086px;color:#fff">Transaction</div>
<div class="t " style="left:110px;top:635px;letter-spacing:-0.01px;color:#fff">Item On Hold</div>
<div class="t " style="left:185px;top:635px;letter-spacing:0.345px;color:#fff">8/13/2013</div>
<div class="a" style="left:14px;top:651px;width:704px;height:3px;background:#e3eefd;border-top:1px solid #8db2e3"></div>
<div class="gh" style="left:13px;top:654px;width:486px;padding-left:3.0px;letter-spacing:0.15px;border-left:1px solid #8db2e3;">Note</div>
<div class="gh" style="left:499px;top:654px;width:105px;padding-left:5.5px;letter-spacing:0.114px;">Type</div>
<div class="gh" style="left:604px;top:654px;width:114px;padding-left:5.5px;letter-spacing:-0.258px;">Added By</div>
<div class="a" style="left:717px;top:561px;width:1px;height:202px;background:#8db2e3"></div>
<div class="a" style="left:257px;top:561px;width:186px;height:48px;border:3px solid #b20a10;z-index:9"></div>
<div class="a" style="left:8px;top:769px;width:1008px;height:1px;background:#5b82bd"></div>
<div class="a" style="left:8px;top:770px;width:1008px;height:22px;background:linear-gradient(#f6f9fe 0,#f6f9fe 1px,#d9e6f9 1px,#d4e3f8 7px,#b5d0f4 7px,#c6daf6 14px,#d5e4f8 18px,#d9e6f9 22px)"></div>
<div class="t " style="left:16px;top:775px;letter-spacing:0.197px;font-weight:bold;font-size:11.500px">Aeon Request Approved</div>
<div class="a" style="left:950px;top:770px;width:1px;height:22px;background:#f4f8fe"></div>
<div class="a" style="left:951px;top:770px;width:65px;height:22px;background:linear-gradient(#c9dcf6 0,#b4cdf0 8px,#a3bfe8 9px,#94b2df 19px,#9fbbe4 22px);border-left:1px solid #6f93c8"></div>
<div class="t bl" style="left:957.5px;top:775px;letter-spacing:-0.243px;">Lending</div>
<div class="a" style="left:1010px;top:779px;width:2px;height:2px;background:#fff"></div>
<div class="a" style="left:1006px;top:783px;width:2px;height:2px;background:#fff"></div>
<div class="a" style="left:1010px;top:783px;width:2px;height:2px;background:#fff"></div>
<div class="a" style="left:1002px;top:787px;width:2px;height:2px;background:#fff"></div>
<div class="a" style="left:1006px;top:787px;width:2px;height:2px;background:#fff"></div>
<div class="a" style="left:1010px;top:787px;width:2px;height:2px;background:#fff"></div>
</div>
</body></html>
